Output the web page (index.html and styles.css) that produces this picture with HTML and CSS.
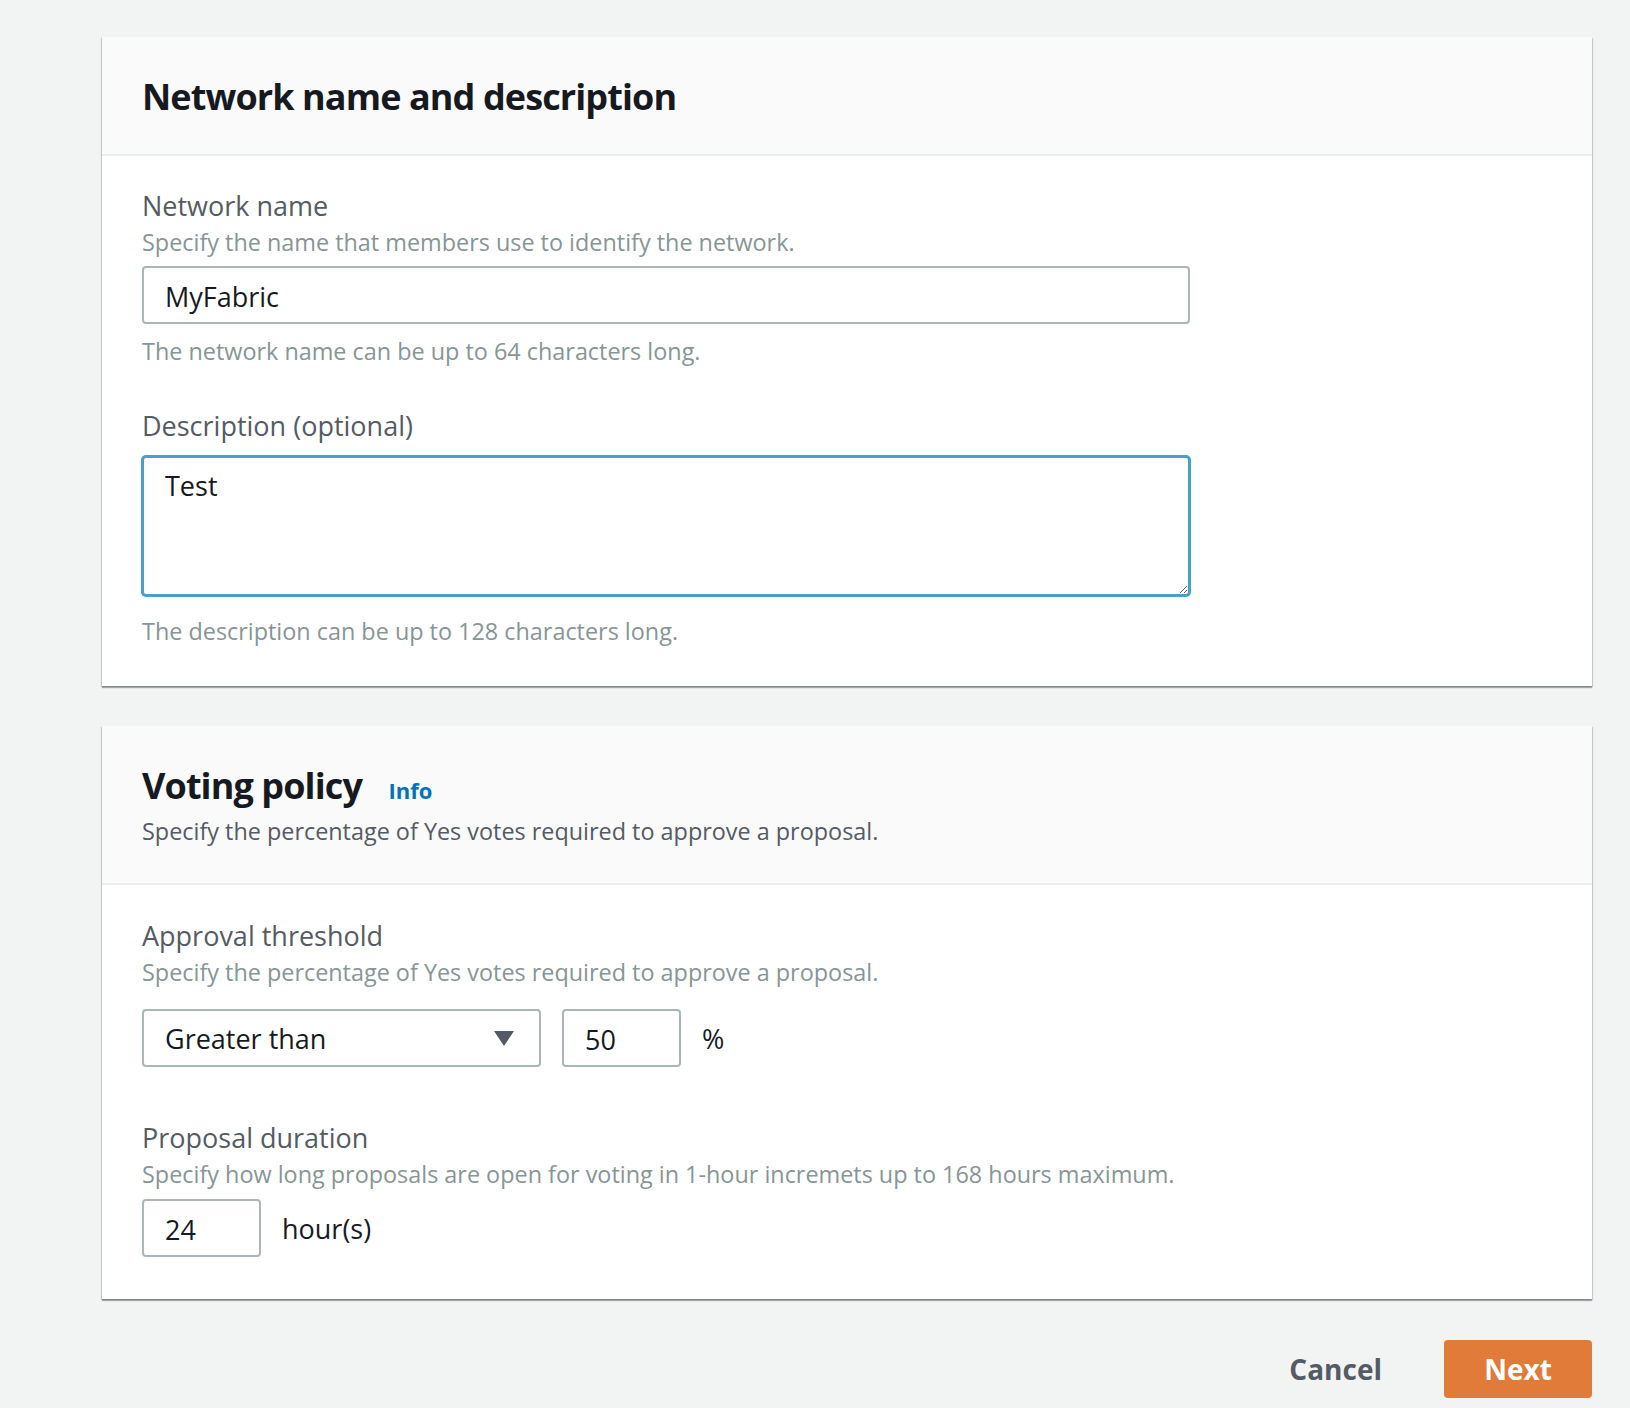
FILE: index.html
```html
<!DOCTYPE html>
<html lang="en">

<head>
  <meta charset="UTF-8" />
  <title>Create network</title>
  <link rel="stylesheet" href="styles.css">
</head>

<body>
  <div class="page">
    <!-- Network name and description -->
    <section class="card">
      <header class="card-header">
        <h2 class="card-title">Network name and description</h2>
      </header>
      <div class="card-body">
        <div class="field">
          <label class="field-label" for="networkName">Network name</label>
          <div class="field-desc">Specify the name that members use to identify the network.</div>
          <input class="text-input wide" id="networkName" type="text" value="MyFabric">
          <div class="field-hint">The network name can be up to 64 characters long.</div>
        </div>
        <div class="field">
          <label class="field-label" for="networkDesc">Description (optional)</label>
          <textarea class="text-area is-focused" id="networkDesc">Test</textarea>
          <div class="field-hint hint-after-area">The description can be up to 128 characters long.</div>
        </div>
      </div>
    </section>

    <!-- Voting policy -->
    <section class="card">
      <header class="card-header">
        <h2 class="card-title">Voting policy <a class="info-link" href="#">Info</a></h2>
        <p class="card-desc">Specify the percentage of Yes votes required to approve a proposal.</p>
      </header>
      <div class="card-body card-body-tall">
        <div class="field">
          <div class="field-label">Approval threshold</div>
          <div class="field-desc">Specify the percentage of Yes votes required to approve a proposal.</div>
          <div class="inline-row threshold-row">
            <div class="select-box">
              <span>Greater than</span>
              <svg class="caret" width="20" height="15" viewBox="0 0 20 15">
                <path d="M0 0 H20 L10 15 Z" fill="#545b64" />
              </svg>
            </div>
            <input class="text-input small" type="text" value="50">
            <span class="unit">%</span>
          </div>
        </div>
        <div class="field field-spaced">
          <div class="field-label">Proposal duration</div>
          <div class="field-desc">Specify how long proposals are open for voting in 1-hour incremets up to 168 hours maximum.</div>
          <div class="inline-row">
            <input class="text-input small" type="text" value="24">
            <span class="unit">hour(s)</span>
          </div>
        </div>
      </div>
    </section>

    <!-- Actions -->
    <div class="actions">
      <button class="btn btn-link">Cancel</button>
      <button class="btn btn-primary">Next</button>
    </div>
  </div>
</body>

</html>
```

FILE: styles.css
```css
/* --- Variables --- */
:root {
  --text-dark: #16191f;
  --text-label: #545b64;
  --text-hint: #879596;
  --border-input: #aab7b8;
  --border-divider: #eaeded;
  --focus-color: #44a1c9;
  --link-color: #0073bb;
  --orange: #e07b39;
  --page-bg: #f2f3f3;
}

/* --- Base --- */
* {
  box-sizing: border-box;
}

body {
  margin: 0;
  background: var(--page-bg);
  font-family: "Open Sans", "Noto Sans", sans-serif;
  color: var(--text-dark);
}

.page {
  padding: 37px 38px 40px 102px;
}

/* --- Cards --- */
.card {
  background: #ffffff;
  box-shadow: 0 2px 1px 0 rgba(0, 28, 36, 0.3), 1px 1px 1px 0 rgba(0, 28, 36, 0.15), -1px 1px 1px 0 rgba(0, 28, 36, 0.15);
}

.card + .card {
  margin-top: 40px;
}

.card-header {
  background: #fafafa;
  border-bottom: 2px solid var(--border-divider);
  padding: 38px 40px 35px;
}

.card-title {
  margin: 0;
  font-size: 36px;
  line-height: 44px;
  font-weight: 700;
  letter-spacing: -0.9px;
  color: var(--text-dark);
}

.info-link {
  margin-left: 18px;
  font-size: 22px;
  font-weight: 700;
  letter-spacing: 0;
  color: var(--link-color);
  text-decoration: none;
}

.card-desc {
  margin: 2px 0 0;
  font-size: 23.4px;
  line-height: 34px;
  color: var(--text-label);
}

.card-body {
  padding: 33px 40px 38px;
}

.card-body-tall {
  padding-top: 34px;
  padding-bottom: 42px;
}

/* --- Fields --- */
.field + .field {
  margin-top: 41px;
}

.field.field-spaced {
  margin-top: 54px;
}

.field-label {
  display: block;
  font-size: 27px;
  line-height: 34px;
  color: var(--text-label);
}

.field-desc,
.field-hint {
  font-size: 23.4px;
  line-height: 34px;
  color: var(--text-hint);
}

.field-desc {
  margin-top: 2px;
}

.field-hint {
  margin-top: 10px;
}

.hint-after-area {
  margin-top: 18px;
}

/* --- Inputs --- */
.text-input {
  display: block;
  height: 58px;
  margin-top: 7px;
  padding: 3px 21px 0;
  border: 2px solid var(--border-input);
  border-radius: 4px;
  background: #ffffff;
  font-family: inherit;
  font-size: 27px;
  color: var(--text-dark);
  outline: none;
}

.text-input.wide {
  width: 1048px;
}

.text-input.small {
  width: 119px;
  margin-top: 0;
}

.text-area {
  display: block;
  width: 1048px;
  height: 140px;
  margin-top: 13px;
  padding: 11px 21px;
  border: 2px solid var(--border-input);
  border-radius: 4px;
  font-family: inherit;
  font-size: 27px;
  line-height: 34px;
  color: var(--text-dark);
  outline: none;
}

.text-area.is-focused {
  border-color: var(--focus-color);
  box-shadow: 0 0 0 1px var(--focus-color);
}

.inline-row {
  display: flex;
  align-items: center;
  gap: 21px;
  margin-top: 8px;
}

.threshold-row {
  margin-top: 20px;
}

.select-box {
  display: flex;
  align-items: center;
  justify-content: space-between;
  width: 399px;
  height: 58px;
  padding: 1px 25px 0 21px;
  border: 2px solid var(--border-input);
  border-radius: 4px;
  font-size: 27px;
  color: var(--text-dark);
}

.unit {
  font-size: 27px;
  color: var(--text-dark);
}

/* --- Actions --- */
.actions {
  display: flex;
  justify-content: flex-end;
  gap: 20px;
  margin-top: 41px;
}

.btn {
  height: 58px;
  padding: 0 42px;
  border: none;
  border-radius: 4px;
  font-family: inherit;
  font-size: 28px;
  font-weight: 700;
  cursor: pointer;
}

.btn-link {
  background: transparent;
  color: var(--text-label);
}

.btn-primary {
  width: 148px;
  padding: 0;
  background: var(--orange);
  color: #ffffff;
}
```
